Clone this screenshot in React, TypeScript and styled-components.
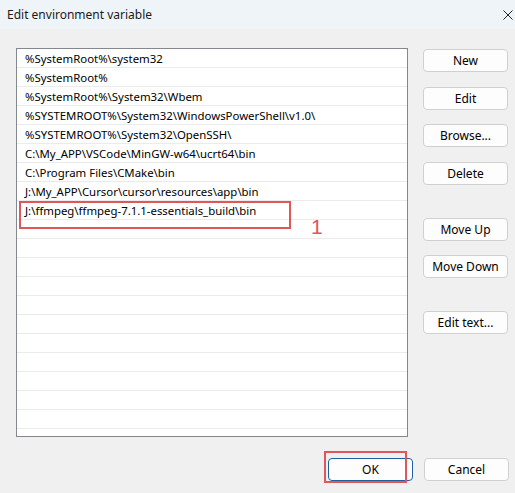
import React from "react";
import styled, { createGlobalStyle } from "styled-components";

const GlobalStyle = createGlobalStyle`
  html, body {
    margin: 0;
    padding: 0;
    background: #f0f0f0;
  }
  * {
    box-sizing: border-box;
  }
`;

const paths = [
  "%SystemRoot%\\system32",
  "%SystemRoot%",
  "%SystemRoot%\\System32\\Wbem",
  "%SYSTEMROOT%\\System32\\WindowsPowerShell\\v1.0\\",
  "%SYSTEMROOT%\\System32\\OpenSSH\\",
  "C:\\My_APP\\VSCode\\MinGW-w64\\ucrt64\\bin",
  "C:\\Program Files\\CMake\\bin",
  "J:\\My_APP\\Cursor\\cursor\\resources\\app\\bin",
  "J:\\ffmpeg\\ffmpeg-7.1.1-essentials_build\\bin",
];

const Window = styled.div`
  width: 515px;
  height: 493px;
  display: flex;
  flex-direction: column;
  background: #f0f0f0;
  font-family: "Noto Sans", "Open Sans", sans-serif;
  font-size: 12px;
  color: #000;
  overflow: hidden;
`;

const TitleBar = styled.div`
  height: 29px;
  flex-shrink: 0;
  display: flex;
  align-items: center;
  justify-content: space-between;
  padding: 0 2px 0 7px;
  background: #eff4f9;
`;

const Title = styled.div`
  font-size: 12px;
  color: #1a1a1a;
`;

const CloseButton = styled.div`
  width: 10px;
  height: 10px;
  display: flex;
  align-items: center;
  justify-content: center;
`;

const Body = styled.div`
  flex: 1;
  display: flex;
  flex-direction: column;
  padding: 19px 6px 0 16px;
`;

const Main = styled.div`
  display: flex;
  gap: 15px;
`;

const ListBox = styled.div`
  width: 392px;
  height: 389px;
  background: #fff;
  border: 1px solid #828790;
  overflow: hidden;
  font-size: 11.4px;
`;

const Row = styled.div`
  position: relative;
  height: 19px;
  display: flex;
  align-items: center;
  padding-left: 8px;
  border-bottom: 1px solid #ebebeb;
  white-space: nowrap;
`;

const RedBox = styled.div<{ $w: number; $h: number; $l: number; $t: number }>`
  position: absolute;
  left: ${({ $l }) => $l}px;
  top: ${({ $t }) => $t}px;
  width: ${({ $w }) => $w}px;
  height: ${({ $h }) => $h}px;
  border: 2px solid #e0575a;
  pointer-events: none;
`;

const Marker = styled.span`
  position: absolute;
  left: 294px;
  top: 15px;
  font-size: 21px;
  line-height: 1;
  color: #e0575a;
  font-family: "Liberation Sans", "Noto Sans", sans-serif;
`;

const ButtonColumn = styled.div`
  display: flex;
  flex-direction: column;
  padding-top: 1px;
`;

const Button = styled.button<{ $gap?: number; $primary?: boolean }>`
  width: 85px;
  height: 23px;
  margin-top: ${({ $gap }) => $gap ?? 0}px;
  background: #fdfdfd;
  border: 1px solid ${({ $primary }) => ($primary ? "#1f5f9e" : "#d0d0d0")};
  border-radius: 4px;
  font-family: inherit;
  font-size: 12px;
  color: #000;
  padding: 0;
  display: flex;
  align-items: center;
  justify-content: center;
`;

const Footer = styled.div`
  display: flex;
  justify-content: flex-end;
  gap: 11px;
  margin-top: 21px;
`;

const OkWrap = styled.div`
  position: relative;
`;

export default function App() {
  const rows = Array.from({ length: 21 }, (_, i) => paths[i] ?? "");
  return (
    <>
      <GlobalStyle />
      <Window>
        <TitleBar>
          <Title>Edit environment variable</Title>
          <CloseButton>
            <svg width="10" height="10" viewBox="0 0 10 10">
              <path d="M0.5 0.5 L9.5 9.5 M9.5 0.5 L0.5 9.5" stroke="#222" strokeWidth="1" fill="none" />
            </svg>
          </CloseButton>
        </TitleBar>
        <Body>
          <Main>
            <ListBox>
              {rows.map((text, i) => (
                <Row key={i}>
                  {text}
                  {i === 8 && (
                    <>
                      <RedBox $l={2} $t={0} $w={272} $h={28} />
                      <Marker>1</Marker>
                    </>
                  )}
                </Row>
              ))}
            </ListBox>
            <ButtonColumn>
              <Button>New</Button>
              <Button $gap={15}>Edit</Button>
              <Button $gap={14}>Browse...</Button>
              <Button $gap={15}>Delete</Button>
              <Button $gap={33}>Move Up</Button>
              <Button $gap={14}>Move Down</Button>
              <Button $gap={33}>Edit text...</Button>
            </ButtonColumn>
          </Main>
          <Footer>
            <OkWrap>
              <Button $primary>OK</Button>
              <RedBox $l={-4} $t={-7} $w={83} $h={32} />
            </OkWrap>
            <Button>Cancel</Button>
          </Footer>
        </Body>
      </Window>
    </>
  );
}
